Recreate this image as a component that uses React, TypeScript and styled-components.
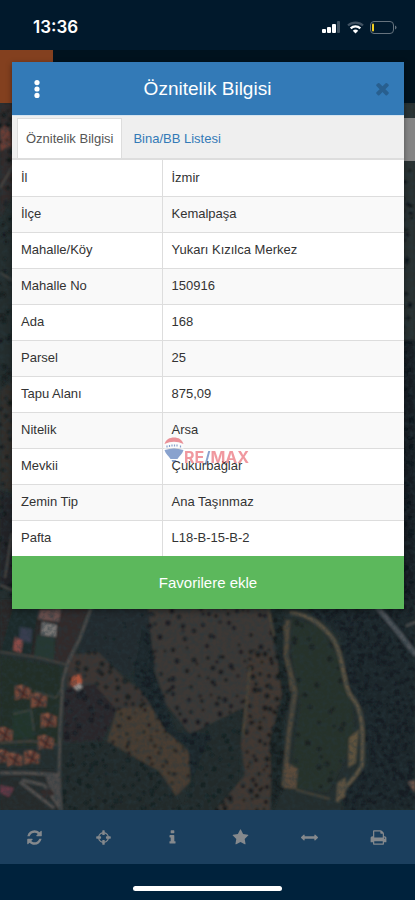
import React from 'react';
import styled, { createGlobalStyle } from 'styled-components';

const GlobalStyle = createGlobalStyle`
  *, *::before, *::after { box-sizing: border-box; }
  body {
    margin: 0;
    background: #00223c;
    font-family: "Liberation Sans", Arial, sans-serif;
    color: #333;
  }
  button { font: inherit; border: 0; padding: 0; background: none; cursor: pointer; }
`;

const Page = styled.div`
  display: flex;
  flex-direction: column;
  min-height: 100vh;
`;

const StatusBar = styled.header`
  display: flex;
  justify-content: space-between;
  align-items: center;
  height: 50px;
  padding: 4px 18px 0 33px;
  background: #01192c;
  color: #fff;
`;

const Clock = styled.time`
  font-family: Inter, sans-serif;
  font-size: 17px;
  font-weight: 600;
  line-height: 20px;
`;

const StatusIcons = styled.div`
  display: flex;
  align-items: center;
  gap: 6px;
`;

const MapArea = styled.main`
  position: relative;
  flex: 1;
  overflow: hidden;
  background: #262c2c;
`;

const MapPicture = styled.svg`
  position: absolute;
  inset: 0;
  width: 100%;
  height: 100%;
`;

const AppHeader = styled.div`
  position: absolute;
  inset: 0 0 auto;
  height: 53px;
  background: #00121e;
`;

const MenuTile = styled.div`
  width: 53px;
  height: 53px;
  background: #83401f;
`;

const SearchBox = styled.div`
  position: absolute;
  top: 68px;
  right: 0;
  width: 40px;
  height: 43px;
  background: #858585;
`;

const Dialog = styled.section`
  position: relative;
  margin: 12px 11px 0 12px;
  background: #fff;
  box-shadow: 0 2px 6px rgba(0, 0, 0, 0.4);
`;

const DialogHeader = styled.div`
  display: grid;
  grid-template-columns: 50px 1fr 44px;
  align-items: center;
  height: 54px;
  background: #337ab7;
  border-bottom: 1px solid #d5e4f0;
`;

const DialogTitle = styled.h1`
  margin: 0 0 0 -7px;
  color: #fff;
  font-size: 19px;
  font-weight: 400;
  line-height: 24px;
  text-align: center;
`;

const HeaderButton = styled.button`
  display: grid;
  place-items: center;
  height: 44px;
`;

const CloseButton = styled(HeaderButton)`
  color: #285f8f;
`;

const TabList = styled.div`
  display: flex;
  height: 44px;
  padding: 2px 5px 0;
  background: #efefef;
  border-bottom: 2px solid #ddd;
`;

const Tab = styled.button<{ $active?: boolean }>`
  padding: 0 8px;
  border: 1px solid ${p => (p.$active ? '#ddd' : 'transparent')};
  border-bottom: 0;
  background: ${p => (p.$active ? '#fff' : 'transparent')};
  color: ${p => (p.$active ? '#555' : '#337ab7')};
  font-size: 13px;
  line-height: 18px;
  margin-right: 2px;
`;

const Attributes = styled.table`
  width: 100%;
  border-collapse: collapse;
  table-layout: fixed;
  font-size: 13px;
  line-height: 18px;

  tr { height: 36px; border-bottom: 1px solid #ddd; }
  tr:nth-child(even) { background: #f9f9f9; }
  tr:last-child { border-bottom: 0; }
  th, td { padding: 0 9px; text-align: left; font-weight: 400; }
  th { width: 150px; border-right: 1px solid #ddd; }
`;

const FavoriteButton = styled.button`
  display: block;
  width: 100%;
  height: 53px;
  background: #5cb85c;
  color: #fff;
  font-size: 15px;
`;

const Watermark = styled.div`
  position: absolute;
  top: 375px;
  left: 152px;
  display: flex;
  align-items: flex-start;
  opacity: 0.52;
  pointer-events: none;
`;

const Brand = styled.span`
  padding-top: 10px;
  color: #e33b48;
  font-family: Inter, sans-serif;
  font-size: 16px;
  font-weight: 700;
  line-height: 20px;
`;

const BrandSlash = styled.span`
  color: #1f4fa3;
`;

const Toolbar = styled.nav`
  display: grid;
  grid-template-columns: repeat(6, 1fr);
  height: 54px;
  padding-right: 2px;
  background: #1b3f5e;
`;

const ToolButton = styled.button`
  display: grid;
  place-items: center;
  color: #85898d;
`;

const HomeArea = styled.footer`
  display: flex;
  justify-content: center;
  align-items: flex-start;
  height: 36px;
  padding-top: 22px;
  background: #00223c;
`;

const HomeBar = styled.div`
  width: 36%;
  height: 5px;
  border-radius: 3px;
  background: #fff;
`;

const rows: [string, string][] = [
  ['İl', 'İzmir'],
  ['İlçe', 'Kemalpaşa'],
  ['Mahalle/Köy', 'Yukarı Kızılca Merkez'],
  ['Mahalle No', '150916'],
  ['Ada', '168'],
  ['Parsel', '25'],
  ['Tapu Alanı', '875,09'],
  ['Nitelik', 'Arsa'],
  ['Mevkii', 'Çukurbağlar'],
  ['Zemin Tip', 'Ana Taşınmaz'],
  ['Pafta', 'L18-B-15-B-2'],
];

const tools = [
  { label: 'Yenile', d: 'M1639 1056q0 5-1 7-64 268-268 434.5t-478 166.5q-146 0-282.5-55t-243.5-157l-129 129q-19 19-45 19t-45-19-19-45v-448q0-26 19-45t45-19h448q26 0 45 19t19 45-19 45l-137 137q71 66 161 102t187 36q134 0 250-65t186-179q11-17 53-117 8-23 30-23h192q13 0 22.5 9.5t9.5 22.5zm25-800v448q0 26-19 45t-45 19h-448q-26 0-45-19t-19-45 19-45l138-138q-148-137-349-137-134 0-250 65t-186 179q-11 17-53 117-8 23-30 23h-199q-13 0-22.5-9.5t-9.5-22.5v-7q65-268 270-434.5t480-166.5q146 0 284 55.5t245 156.5l130-129q19-19 45-19t45 19 19 45z' },
  { label: 'Konum', d: 'M1325 1024h-109q-26 0-45-19t-19-45v-128q0-26 19-45t45-19h109q-32-108-112.5-188.5t-188.5-112.5v109q0 26-19 45t-45 19h-128q-26 0-45-19t-19-45v-109q-108 32-188.5 112.5t-112.5 188.5h109q26 0 45 19t19 45v128q0 26-19 45t-45 19h-109q32 108 112.5 188.5t188.5 112.5v-109q0-26 19-45t45-19h128q26 0 45 19t19 45v109q108-32 188.5-112.5t112.5-188.5zm339-192v128q0 26-19 45t-45 19h-143q-37 161-154.5 278.5t-278.5 154.5v143q0 26-19 45t-45 19h-128q-26 0-45-19t-19-45v-143q-161-37-278.5-154.5t-154.5-278.5h-143q-26 0-45-19t-19-45v-128q0-26 19-45t45-19h143q37-161 154.5-278.5t278.5-154.5v-143q0-26 19-45t45-19h128q26 0 45 19t19 45v143q161 37 278.5 154.5t154.5 278.5h143q26 0 45 19t19 45z' },
  { label: 'Bilgi', d: 'M1216 1344v128q0 26-19 45t-45 19h-512q-26 0-45-19t-19-45v-128q0-26 19-45t45-19h64v-384h-64q-26 0-45-19t-19-45v-128q0-26 19-45t45-19h384q26 0 45 19t19 45v576h64q26 0 45 19t19 45zm-128-1152v192q0 26-19 45t-45 19h-256q-26 0-45-19t-19-45v-192q0-26 19-45t45-19h256q26 0 45 19t19 45z' },
  { label: 'Favoriler', d: 'M1728 647q0 22-26 48l-363 354 86 500q1 7 1 20 0 21-10.5 35.5t-30.5 14.5q-19 0-40-12l-449-236-449 236q-22 12-40 12-21 0-31.5-14.5t-10.5-35.5q0-6 2-20l86-500-364-354q-25-27-25-48 0-37 56-46l502-73 225-455q19-41 49-41t49 41l225 455 502 73q56 9 56 46z' },
  { label: 'Ölçüm', d: 'M1792 896q0 26-19 45l-256 256q-19 19-45 19t-45-19-19-45v-128h-1024v128q0 26-19 45t-45 19-45-19l-256-256q-19-19-19-45t19-45l256-256q19-19 45-19t45 19 19 45v128h1024v-128q0-26 19-45t45-19 45 19l256 256q19 19 19 45z' },
  { label: 'Yazdır', d: 'M448 1536h896v-256h-896v256zm0-640h896v-384h-160q-40 0-68-28t-28-68v-160h-640v640zm1152 64q0-26-19-45t-45-19-45 19-19 45 19 45 45 19 45-19 19-45zm128 0v416q0 13-9.5 22.5t-22.5 9.5h-224v160q0 40-28 68t-68 28h-960q-40 0-68-28t-28-68v-160h-224q-13 0-22.5-9.5t-9.5-22.5v-416q0-79 56.5-135.5t135.5-56.5h64v-544q0-40 28-68t68-28h672q40 0 88 20t76 48l152 152q28 28 48 76t20 88v256h64q79 0 135.5 56.5t56.5 135.5z' },
];

const closePath = 'M1490 1322q0 40-28 68l-136 136q-28 28-68 28t-68-28l-294-294-294 294q-28 28-68 28t-68-28l-136-136q-28-28-28-68t28-68l294-294-294-294q-28-28-28-68t28-68l136-136q28-28 68-28t68 28l294 294 294-294q28-28 68-28t68 28l136 136q28 28 28 68t-28 68l-294 294 294 294q28 28 28 68z';

function GlyphIcon({ d, size }: { d: string; size: number }) {
  return (
    <svg width={size} height={size} viewBox="0 0 1792 1792" fill="currentColor" aria-hidden="true">
      <path d={d} />
    </svg>
  );
}

type Point = [number, number];

function inside([x, y]: Point, poly: Point[]) {
  let hit = false;
  for (let i = 0, j = poly.length - 1; i < poly.length; j = i++) {
    const [xi, yi] = poly[i];
    const [xj, yj] = poly[j];
    if (yi > y !== yj > y && x < ((xj - xi) * (y - yi)) / (yj - yi) + xi) hit = !hit;
  }
  return hit;
}

/* Plants trees on a jittered grid inside a field outline. */
function plant(poly: Point[], step: number, radius: number, seed: number): string {
  let s = seed;
  const rnd = () => {
    s = (s * 16807) % 2147483647;
    return s / 2147483647;
  };
  const xs = poly.map(p => p[0]);
  const ys = poly.map(p => p[1]);
  let d = '';
  for (let y = Math.min(...ys); y < Math.max(...ys); y += step) {
    for (let x = Math.min(...xs); x < Math.max(...xs); x += step) {
      const px = Math.round(x + (rnd() - 0.5) * step * 1.1);
      const py = Math.round(y + (rnd() - 0.5) * step * 1.1);
      const r = (radius * (0.5 + rnd() * 0.6)).toFixed(1);
      if (rnd() > 0.25 && inside([px, py], poly)) {
        d += `M${px} ${py}m-${r} 0a${r} ${r} 0 1 0 ${2 * +r} 0a${r} ${r} 0 1 0 -${2 * +r} 0`;
      }
    }
  }
  return d;
}

const fields: { poly: Point[]; fill: string; step: number; r: number; tree: string }[] = [
  { poly: [[90, 606], [155, 606], [156, 640], [128, 678], [98, 655], [76, 657]], fill: '#212b2e', step: 14, r: 1.5, tree: '#182123' },
  { poly: [[148, 606], [270, 606], [280, 700], [190, 734], [166, 704], [153, 665]], fill: '#3d3834', step: 10, r: 2.6, tree: '#1b1f20' },
  { poly: [[70, 655], [98, 652], [128, 682], [148, 692], [166, 715], [142, 745], [116, 710], [66, 686]], fill: '#3d3631', step: 8, r: 2.7, tree: '#1c2021' },
  { poly: [[65, 688], [94, 684], [117, 710], [103, 740], [63, 743]], fill: '#2c282b', step: 8, r: 3, tree: '#1e1f23' },
  { poly: [[117, 709], [150, 706], [168, 732], [189, 752], [190, 782], [176, 796], [160, 772], [107, 741]], fill: '#483d31', step: 8, r: 1.9, tree: '#211f1d' },
  { poly: [[60, 744], [107, 742], [160, 772], [176, 796], [184, 811], [62, 811]], fill: '#232a2a', step: 8, r: 2.6, tree: '#182123' },
  { poly: [[190, 734], [247, 706], [240, 758], [238, 811], [184, 811], [190, 782]], fill: '#202c2b', step: 10, r: 2.5, tree: '#182224' },
  { poly: [[249, 650], [281, 655], [288, 695], [272, 730], [270, 811], [215, 811], [245, 775], [241, 745]], fill: '#433932', step: 8, r: 2.7, tree: '#1e1f1f' },
  { poly: [[292, 618], [320, 627], [338, 656], [352, 702], [355, 740], [328, 792], [288, 788], [300, 705], [291, 650]], fill: '#26302c', step: 14, r: 2.6, tree: '#1b2221' },
];

const forest: Point[] = [[298, 600], [415, 600], [415, 811], [343, 811], [345, 790], [367, 765], [364, 710], [349, 690], [340, 636]];
const leftStrip: Point[] = [[0, 110], [14, 110], [14, 610], [0, 610]];
const rightStrip: Point[] = [[401, 165], [415, 165], [415, 610], [401, 610]];
const valley: Point[] = [[143, 625], [151, 635], [155, 678], [176, 732], [210, 734], [192, 780], [188, 748], [166, 732], [150, 704], [133, 680]];
const hedge: Point[] = [[270, 606], [282, 606], [294, 690], [284, 720], [284, 785], [272, 811], [270, 740], [282, 695]];
const roofs: Point[] = [[23, 692], [39, 700], [49, 720], [46, 742], [5, 734], [3, 756], [15, 759], [32, 757]];

function SatelliteMap() {
  return (
    <MapPicture viewBox="0 50 415 760" preserveAspectRatio="xMidYMax slice" aria-hidden="true">
      <defs>
        <filter id="grain" x="0" y="0" width="100%" height="100%">
          <feTurbulence type="fractalNoise" baseFrequency="0.22" numOctaves="3" seed="8" />
          <feColorMatrix values="0 0 0 0 0.02  0 0 0 0 0.04  0 0 0 0 0.05  1.8 0.6 0 0 -0.95" />
        </filter>
        <filter id="soft"><feGaussianBlur stdDeviation="0.8" /></filter>
      </defs>
      <rect y="50" width="415" height="760" fill="#242d2d" />
      <g filter="url(#soft)">
        <path d="M0 103h14v90L0 218z" fill="#322b29" />
        <path d="M0 128l9-4 2 22-11 5z" fill="#6b3e34" />
        <path d="M0 390l14-10v110H0z" fill="#302d2b" />
        <path d="M0 490l14 8v90H0z" fill="#202126" />
        <path d={plant(leftStrip, 9, 2.6, 44)} fill="#131b1e" />
        <path d="M0 188l14-24M0 273l14 8M0 585l14 6M5 578l7-45" stroke="#4b4845" strokeWidth="2" fill="none" />
        <path d="M401 103h14v240l-14 20z" fill="#293131" />
        <path d="M401 340h14v270h-14z" fill="#121a20" />
        <path d={plant(rightStrip, 7, 2.5, 96)} fill="#0f171b" />

        <path d="M0 600h90L70 662 0 650z" fill="#2a2728" />
        <path d="M13 606h26l-8 48H0z" fill="#1f2b29" />
        <path d="M62 606h27l-21 57-15-2z" fill="#302a2a" />
        <path d="M40 610l21-1-2 13-21-3z" fill="#67504e" />
        <path d="M42 622l15 3-1 12-15-2z" fill="#777473" />
        <path d="M37 635l18 3-1 22-20-4z" fill="#263932" />
        <path d="M20 627l12 2-1 14-12-3z" fill="#383d50" />
        <path d="M15 637l8 4-2 12-8-3z" fill="#894b47" />
        <path d="M0 656l64 11-5 79H0z" fill="#242d28" />
        <path d="M13 710h20v28H12z" fill="#20342c" />
        <path d="M0 770h60v40H0z" fill="#252b2b" />
        {fields.map((f, i) => (
          <g key={i}>
            <polygon points={f.poly.join(' ')} fill={f.fill} />
            <path d={plant(f.poly, f.step, f.r, 71 + i * 913)} fill={f.tree} />
          </g>
        ))}
        <polygon points={valley.join(' ')} fill="#1a272b" />
        <path d={plant(valley, 6, 3, 57)} fill="#131f22" />
        <polygon points={hedge.join(' ')} fill="#1e2627" />
        <path d={plant(hedge, 6, 3, 157)} fill="#131b1e" />
        <polygon points={forest.join(' ')} fill="#1c262a" />
        <path d={plant(forest, 6, 2.8, 359)} fill="#131c21" />

        <path d="M91 608L80 638 68 662 63 680 60 730 59 775 61 811" stroke="#4d4b49" strokeWidth="3" fill="none" />
        <path d="M0 652l35 5 33 8M0 743l31-2 26 4" stroke="#48443f" strokeWidth="2" fill="none" />
        <path d="M0 773h28l30 2M22 780l22 5 16 23M20 782l34 26" stroke="#545150" strokeWidth="3" fill="none" />
        <path d="M45 774l14 2 2 32-12-20z" fill="#4c4a48" />
        <path d="M13 714l18-4 3 21M34 691l22 7 5-9" stroke="#53504b" strokeWidth="1" fill="none" />
        <path d="M290 613C307 613 325 626 335 642 344 661 343 681 350 695 364 708 363 735 362 765 355 781 343 784 337 802" stroke="#5b5343" strokeWidth="4" fill="none" />
        <path d="M288 620l-2 35 9 37-6 41-5 54" stroke="#4e463b" strokeWidth="5" fill="none" />
        <path d="M268 607l6 29M284 625l7 66M250 667l-7 70M296 790l34 9" stroke="#4f4739" strokeWidth="2" fill="none" />
        <path d="M349 738l10-9-3 34-8 5z" fill="#61533e" />
        <path d="M337 783l9-6-1 20-9 5z" fill="#5b5140" />
        <path d="M286 762l12 7-2 20-12-1z" fill="#5c4c3b" />
        <path d="M377 607l22 26 17 22" stroke="#50545a" strokeWidth="5" fill="none" />
        <path d="M406 626l10-4" stroke="#575453" strokeWidth="2" />
        <path d="M408 782l7-2v13z" fill="#70564c" />

        {roofs.map(([x, y], i) => (
          <g key={i}>
            <path d={`M${x - 8} ${y - 6}l7-1 9 4-1 10-8-1-7 2z`} fill="#75483a" />
            <path d={`M${x - 6} ${y - 3}l11 8m-2-11l-5 13`} stroke="#3d2020" strokeWidth="2" />
            <path d={`M${x - 3} ${y - 4}l2-2`} stroke="#98614c" strokeWidth="2" />
          </g>
        ))}
        <path d="M72 677l8-3 3 9-6 5-6-3z" fill="#a9523a" />
        <path d="M73 687l7-4 3 4-5 4z" fill="#918c89" />
        <path d="M0 785l14 3-5 9-9-4z" fill="#653744" />
        <path d="M40 790l10-2 5 6-12 5z" fill="#302b2a" />
      </g>
      <rect y="50" width="415" height="760" filter="url(#grain)" opacity="0.55" />
    </MapPicture>
  );
}

export default function App() {
  return (
    <Page>
      <GlobalStyle />
      <StatusBar>
        <Clock>13:36</Clock>
        <StatusIcons aria-hidden="true">
          <svg width="19" height="13" viewBox="0 0 19 13" fill="#fff">
            <rect x="0" y="8" width="4" height="4" rx="1" />
            <rect x="5" y="6" width="4" height="6" rx="1" />
            <rect x="10" y="3" width="4" height="9" rx="1" />
            <rect x="15" y="0" width="3" height="12" rx="1" opacity="0.25" />
          </svg>
          <svg width="17" height="13" viewBox="0 0 17 13" fill="none">
            <path d="M1 4.5a11 11 0 0 1 15 0" stroke="#415262" strokeWidth="2.3" />
            <path d="M3.7 7.3a7 7 0 0 1 9.6 0" stroke="#fff" strokeWidth="2.3" />
            <path d="M8.5 12.4L5.8 9.7a4 4 0 0 1 5.4 0z" fill="#fff" />
          </svg>
          <svg width="27" height="13" viewBox="0 0 27 13">
            <rect x="0.5" y="0.5" width="23" height="12" rx="3.5" fill="none" stroke="#66737e" />
            <rect x="2" y="2.5" width="2" height="8" rx="1" fill="#f4d021" />
            <path d="M25 4.5q1.5.5 1.5 2t-1.5 2z" fill="#66737e" />
          </svg>
        </StatusIcons>
      </StatusBar>

      <MapArea>
        <SatelliteMap />
        <AppHeader><MenuTile /></AppHeader>
        <SearchBox />
        <Dialog role="dialog" aria-labelledby="dialog-title">
          <DialogHeader>
            <HeaderButton type="button" aria-label="Menü">
              <svg width="6" height="18" viewBox="0 0 6 18" fill="#fff" aria-hidden="true">
                <circle cx="3" cy="2.6" r="2.6" />
                <circle cx="3" cy="9" r="2.6" />
                <circle cx="3" cy="15.4" r="2.6" />
              </svg>
            </HeaderButton>
            <DialogTitle id="dialog-title">Öznitelik Bilgisi</DialogTitle>
            <CloseButton type="button" aria-label="Kapat">
              <GlyphIcon d={closePath} size={19} />
            </CloseButton>
          </DialogHeader>
          <TabList role="tablist">
            <Tab type="button" role="tab" aria-selected="true" $active>Öznitelik Bilgisi</Tab>
            <Tab type="button" role="tab" aria-selected="false">Bina/BB Listesi</Tab>
          </TabList>
          <Attributes>
            <tbody>
              {rows.map(([name, value]) => (
                <tr key={name}>
                  <th scope="row">{name}</th>
                  <td>{value}</td>
                </tr>
              ))}
            </tbody>
          </Attributes>
          <FavoriteButton type="button">Favorilere ekle</FavoriteButton>
          <Watermark>
            <svg width="20" height="26" viewBox="0 0 20 26" aria-hidden="true">
              <path d="M0.5 7C2 2.5 5.5 0.5 10 0.5S18 2.5 19.5 7Q10 2.5 0.5 7z" fill="#dc3440" />
              <path d="M0.5 7.5Q10 3.5 19.5 7.5V12Q10 9 0.5 12z" fill="#fff" />
              <path d="M3 8.500v2M5.500 8v2M8 7.500v2M10.500 7.500v2M13 7.500v2M16.500 8.500v2" stroke="#1f4fa3" strokeWidth="1.2" />
              <path d="M0.5 13Q10 10 19.5 13C18.5 17 15 19.5 13.5 22H6.5C5 19.500 1.500 17 0.500 13z" fill="#1f4fa3" />
              <path d="M7.500 23h5l-1 2h-3z" fill="#1f4fa3" />
            </svg>
            <Brand>RE<BrandSlash>/</BrandSlash>MAX</Brand>
          </Watermark>
        </Dialog>
      </MapArea>

      <Toolbar aria-label="Harita araçları">
        {tools.map(t => (
          <ToolButton key={t.label} type="button" aria-label={t.label}>
            <GlyphIcon d={t.d} size={17} />
          </ToolButton>
        ))}
      </Toolbar>
      <HomeArea><HomeBar /></HomeArea>
    </Page>
  );
}
